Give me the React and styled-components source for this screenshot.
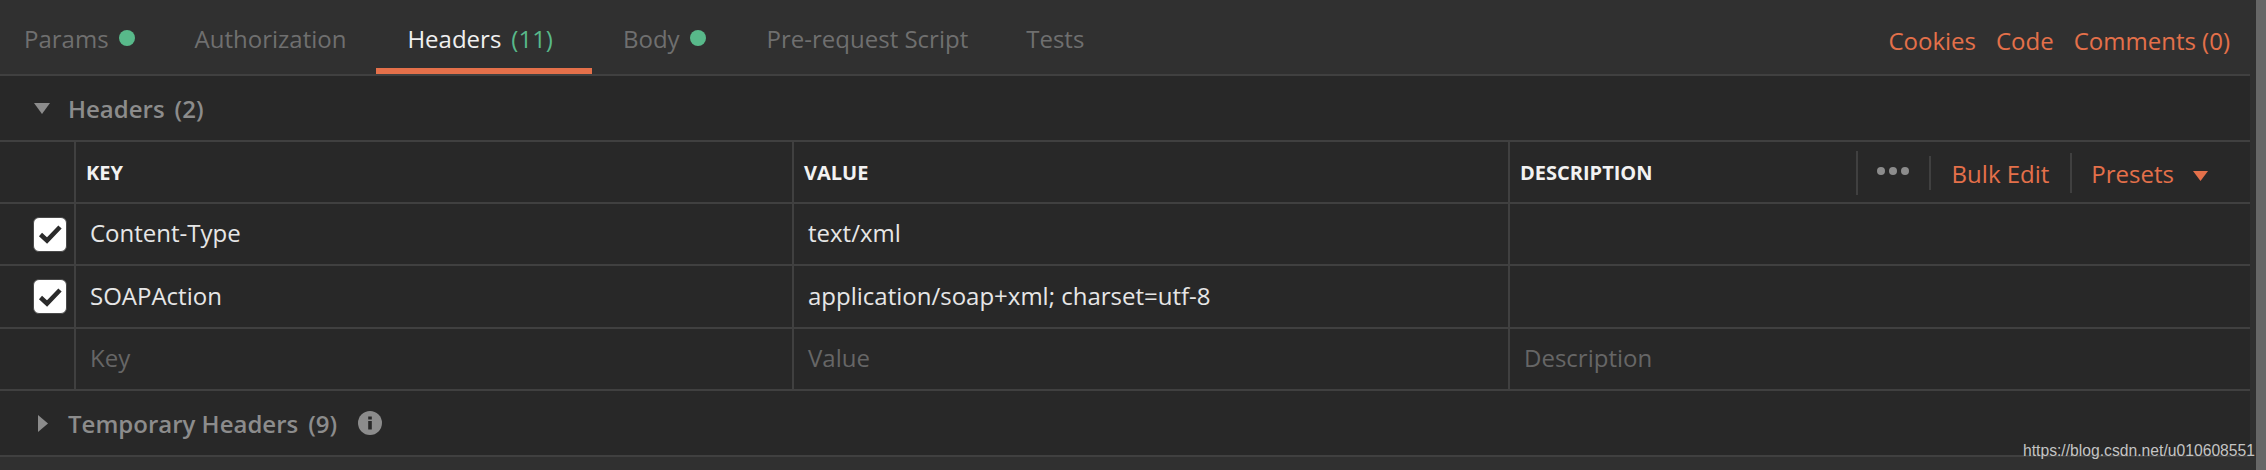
import React from 'react'
import styled, { createGlobalStyle } from 'styled-components'

const orange = '#e4704a'
const green = '#58b98a'
const line = '#404040'

const GlobalStyle = createGlobalStyle`
  html, body { margin: 0; padding: 0; background: #303030; }
  body { font-family: "Open Sans", "Noto Sans", sans-serif; overflow: hidden; }
`

const Page = styled.div`
  position: relative;
  width: 2266px;
  height: 470px;
  display: flex;
  background: #303030;
  overflow: hidden;
`

const Main = styled.div`
  width: 2250px;
  flex: none;
`

const Scrollbar = styled.div`
  margin-left: 6px;
  width: 10px;
  background: #676767;
`

const TabBar = styled.div`
  height: 74px;
  display: flex;
  justify-content: space-between;
  border-bottom: 2px solid ${line};
  background: #303030;
`

const Tabs = styled.div`
  display: flex;
`

const Tab = styled.div`
  height: 74px;
  box-sizing: border-box;
  display: flex;
  align-items: center;
  gap: 10px;
  padding: 8px ${p => (p.$active ? '39px' : '30px')} 0 ${p => p.$left}px;
  font-size: 24px;
  color: ${p => (p.$active ? '#f0f0f0' : '#6f6f6f')};
  border-bottom: ${p => (p.$active ? `6px solid ${orange}` : '6px solid transparent')};
`

const Count = styled.span`
  color: ${green};
`

const Dot = styled.span`
  width: 16px;
  height: 16px;
  border-radius: 50%;
  background: ${green};
`

const Links = styled.div`
  display: flex;
  align-items: center;
  gap: 20px;
  padding: 7px 20px 0 0;
`

const OrangeLink = styled.span`
  font-size: 24px;
  color: ${orange};
`

const Section = styled.div`
  height: 64px;
  display: flex;
  align-items: center;
  background: #282828;
  border-bottom: 2px solid ${line};
  color: #8c8c8c;
  font-size: 24px;
  font-weight: 600;
`

const Caret = styled.svg`
  flex: none;
  margin-left: ${p => p.$left}px;
  margin-right: ${p => p.$right}px;
`

const SectionCount = styled.span`
  margin-left: 10px;
`

const InfoIcon = styled.svg`
  margin-left: 21px;
`

const Row = styled.div`
  height: ${p => p.$height}px;
  display: grid;
  grid-template-columns: 74px 718px 716px 1fr;
  background: #282828;
  border-bottom: 2px solid ${line};
`

const Cell = styled.div`
  display: flex;
  align-items: center;
  padding: 0 0 3px 14px;
  border-left: 2px solid ${line};
  font-size: 24px;
  color: ${p => (p.$placeholder ? '#666666' : '#e6e6e6')};
`

const HeadCell = styled(Cell)`
  padding: 1px 0 0 10px;
  font-size: 20px;
  font-weight: 700;
  color: #f2f2f2;
`

const DescHead = styled(HeadCell)`
  justify-content: space-between;
  padding-right: 42px;
`

const CheckCell = styled.div`
  display: flex;
  align-items: center;
  padding-left: 33px;
`

const CheckBox = styled.div`
  width: 32px;
  height: 33px;
  display: flex;
  align-items: center;
  justify-content: center;
  background: #fff;
  border: 1px solid #4a4a4a;
  border-radius: 6px;
`

const Actions = styled.div`
  display: flex;
  align-items: center;
  font-weight: 400;
`

const Divider = styled.div`
  width: 2px;
  height: ${p => p.$height}px;
  background: ${line};
`

const MoreDots = styled.svg`
  margin: 0 20px 3px 19px;
`

const ActionLink = styled.span`
  font-size: 24px;
  color: ${orange};
  padding: ${p => p.$pad};
  margin-top: 2px;
`

const DownCaret = styled.svg`
  margin: 6px 0 0 19px;
`

const Watermark = styled.div`
  position: absolute;
  left: 2023px;
  top: 442px;
  font-family: "Liberation Sans", Arial, sans-serif;
  font-size: 15.7px;
  color: #c4c4c4;
  white-space: nowrap;
`

const Check = () => (
  <CheckBox>
    <svg width="25" height="22" viewBox="0 0 25 22">
      <path d="M2.5 11.5 L9 17.5 L22 4" fill="none" stroke="#2b2b2b" strokeWidth="4.6" />
    </svg>
  </CheckBox>
)

const rows = [
  { key: 'Content-Type', value: 'text/xml', height: 60 },
  { key: 'SOAPAction', value: 'application/soap+xml; charset=utf-8', height: 61 },
]

const App = () => (
  <Page>
    <GlobalStyle />
    <Main>
      <TabBar>
        <Tabs>
          <Tab $left={24}>Params <Dot /></Tab>
          <Tab $left={30}>Authorization</Tab>
          <Tab $left={31} $active>Headers <Count>(11)</Count></Tab>
          <Tab $left={31}>Body <Dot /></Tab>
          <Tab $left={31}>Pre-request Script</Tab>
          <Tab $left={28}>Tests</Tab>
        </Tabs>
        <Links>
          <OrangeLink>Cookies</OrangeLink>
          <OrangeLink>Code</OrangeLink>
          <OrangeLink>Comments (0)</OrangeLink>
        </Links>
      </TabBar>

      <Section>
        <Caret $left={34} $right={18} width="16" height="11" viewBox="0 0 16 11">
          <path d="M0 0 H16 L8 11 Z" fill="#8c8c8c" />
        </Caret>
        Headers <SectionCount>(2)</SectionCount>
      </Section>

      <Row $height={60}>
        <div />
        <HeadCell>KEY</HeadCell>
        <HeadCell>VALUE</HeadCell>
        <DescHead>
          DESCRIPTION
          <Actions>
            <Divider $height={44} />
            <MoreDots width="32" height="8" viewBox="0 0 32 8">
              <circle cx="4" cy="4" r="4" fill="#8c8c8c" />
              <circle cx="16" cy="4" r="4" fill="#8c8c8c" />
              <circle cx="28" cy="4" r="4" fill="#8c8c8c" />
            </MoreDots>
            <Divider $height={34} />
            <ActionLink $pad="0 21px 0 21px">Bulk Edit</ActionLink>
            <Divider $height={40} />
            <ActionLink $pad="0 0 0 19px">Presets</ActionLink>
            <DownCaret width="15" height="10" viewBox="0 0 15 10">
              <path d="M0 0 H15 L7.5 10 Z" fill={orange} />
            </DownCaret>
          </Actions>
        </DescHead>
      </Row>

      {rows.map(r => (
        <Row $height={r.height} key={r.key}>
          <CheckCell><Check /></CheckCell>
          <Cell>{r.key}</Cell>
          <Cell>{r.value}</Cell>
          <Cell />
        </Row>
      ))}

      <Row $height={60}>
        <div />
        <Cell $placeholder>Key</Cell>
        <Cell $placeholder>Value</Cell>
        <Cell $placeholder>Description</Cell>
      </Row>

      <Section>
        <Caret $left={38} $right={20} width="10" height="17" viewBox="0 0 10 17">
          <path d="M0 0 L10 8.5 L0 17 Z" fill="#8c8c8c" />
        </Caret>
        Temporary Headers <SectionCount>(9)</SectionCount>
        <InfoIcon width="24" height="24" viewBox="0 0 24 24">
          <circle cx="12" cy="12" r="12" fill="#8c8c8c" />
          <rect x="10.2" y="10" width="3.6" height="8.5" fill="#282828" />
          <rect x="10.2" y="5.5" width="3.6" height="3" fill="#282828" />
        </InfoIcon>
      </Section>
    </Main>
    <Scrollbar />
    <Watermark>https://blog.csdn.net/u010608551</Watermark>
  </Page>
)

export default App
